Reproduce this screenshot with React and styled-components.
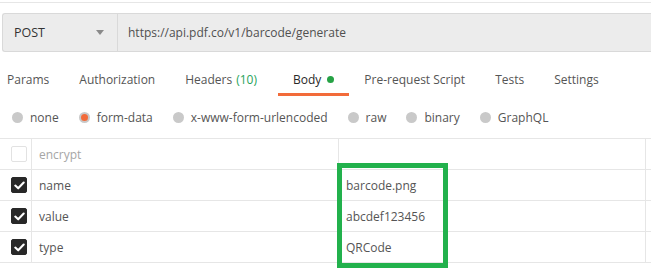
import React from 'react';
import styled, {createGlobalStyle} from 'styled-components';

const GlobalStyle = createGlobalStyle`
    body {
        margin: 0;
        background: #ffffff;
        font-family: "Open Sans", "Liberation Sans", sans-serif;
        font-size: 12px;
        color: #505050;
    }
`;

const Page = styled.div`
    width: 651px;
    height: 276px;
    padding-top: 2px;
    box-sizing: border-box;
    overflow: hidden;
`;

const TopRule = styled.div`
    height: 1px;
    background: #e6e6e6;
`;

const RequestBar = styled.div`
    display: flex;
    height: 39px;
    margin: 10px 0 0 2px;
    background: #ececec;
    border: 1px solid #d9d9d9;
    border-right: none;
    border-radius: 3px 0 0 3px;
    box-sizing: border-box;
`;

const MethodSelect = styled.div`
    width: 115px;
    display: flex;
    align-items: center;
    justify-content: space-between;
    padding: 0 13px 0 11px;
    box-sizing: border-box;
    border-right: 1px solid #d9d9d9;
    color: #333333;
    font-size: 12.5px;
`;

const Caret = styled.span`
    width: 0;
    height: 0;
    border-left: 4px solid transparent;
    border-right: 4px solid transparent;
    border-top: 5px solid #8a8a8a;
`;

const UrlInput = styled.div`
    flex: 1;
    display: flex;
    align-items: center;
    padding-left: 10px;
    color: #505050;
`;

const TabBar = styled.div`
    display: flex;
    height: 31px;
    margin-top: 12px;
    & > :first-child {
        padding-left: 7px;
    }
`;

const Tab = styled.div`
    position: relative;
    display: flex;
    align-items: center;
    height: 100%;
    padding: 0 15px;
    color: ${p => (p.$active ? '#282828' : '#555555')};
    white-space: nowrap;
    &::after {
        content: '';
        display: ${p => (p.$active ? 'block' : 'none')};
        position: absolute;
        left: 0;
        right: 0;
        bottom: -1px;
        height: 3px;
        background: #f26b3a;
    }
`;

const Count = styled.span`
    margin: 0 6px 0 4px;
    color: #29a35a;
`;

const Dot = styled.span`
    width: 7px;
    height: 7px;
    margin-left: 6px;
    border-radius: 50%;
    background: #26a245;
`;

const ModeBar = styled.div`
    display: flex;
    align-items: center;
    height: 30px;
    margin-top: 7px;
    padding-left: 12px;
    gap: 20px;
`;

const Mode = styled.label`
    display: flex;
    align-items: center;
    gap: 7px;
    color: #555555;
`;

const Radio = styled.span`
    position: relative;
    width: 11px;
    height: 11px;
    border-radius: 50%;
    background: #c9c9c9;
    &::after {
        content: '';
        display: ${p => (p.$checked ? 'block' : 'none')};
        position: absolute;
        left: 2px;
        top: 2px;
        width: 7px;
        height: 7px;
        border-radius: 50%;
        background: #f26b3a;
    }
`;

const Table = styled.div`
    position: relative;
    margin-top: 6px;
    border-top: 1px solid #e6e6e6;
`;

const Row = styled.div`
    display: grid;
    grid-template-columns: 32px 307px 307px 3px;
    height: 30px;
    border-bottom: 1px solid #e6e6e6;
`;

const Cell = styled.div`
    display: flex;
    align-items: center;
    padding-left: 7px;
    border-right: 1px solid #e6e6e6;
    color: ${p => (p.$muted ? '#a6a6a6' : '#555555')};
`;

const CheckCell = styled.div`
    display: flex;
    align-items: center;
    justify-content: flex-end;
    padding-right: 4px;
    border-right: 1px solid #e6e6e6;
`;

const Checkbox = styled.span`
    width: 16px;
    height: 16px;
    box-sizing: border-box;
    border-radius: 2px;
    display: flex;
    align-items: center;
    justify-content: center;
    background: ${p => (p.$checked ? '#282828' : '#ffffff')};
    border: 1px solid ${p => (p.$checked ? '#282828' : '#e2e2e2')};
`;

const Highlight = styled.div`
    position: absolute;
    left: 337px;
    top: 24px;
    width: 111px;
    height: 105px;
    border: 5px solid #22b14c;
    box-sizing: border-box;
    pointer-events: none;
`;

const tabs = [
    {label: 'Params'},
    {label: 'Authorization'},
    {label: 'Headers', count: '(10)'},
    {label: 'Body', active: true},
    {label: 'Pre-request Script'},
    {label: 'Tests'},
    {label: 'Settings'}
];

const modes = ['none', 'form-data', 'x-www-form-urlencoded', 'raw', 'binary', 'GraphQL'];

const rows = [
    {key: 'encrypt', value: '', checked: false},
    {key: 'name', value: 'barcode.png', checked: true},
    {key: 'value', value: 'abcdef123456', checked: true},
    {key: 'type', value: 'QRCode', checked: true}
];

const Tick = () => (
    <svg width="11" height="9" viewBox="0 0 11 9">
        <path d="M1.3 4.6 L4.2 7.3 L9.7 1.6" fill="none" stroke="#ffffff" strokeWidth="2.1" strokeLinecap="round" strokeLinejoin="round"/>
    </svg>
);

export default function App() {
    return (
        <Page>
            <GlobalStyle/>
            <TopRule/>
            <RequestBar>
                <MethodSelect>
                    POST
                    <Caret/>
                </MethodSelect>
                <UrlInput>https://api.pdf.co/v1/barcode/generate</UrlInput>
            </RequestBar>
            <TabBar>
                {tabs.map(t => (
                    <Tab key={t.label} $active={t.active}>
                        {t.label}
                        {t.count && <Count>{t.count}</Count>}
                        {t.active && <Dot/>}
                    </Tab>
                ))}
            </TabBar>
            <ModeBar>
                {modes.map(m => (
                    <Mode key={m}>
                        <Radio $checked={m === 'form-data'}/>
                        {m}
                    </Mode>
                ))}
            </ModeBar>
            <Table>
                {rows.map(r => (
                    <Row key={r.key}>
                        <CheckCell>
                            <Checkbox $checked={r.checked}>{r.checked && <Tick/>}</Checkbox>
                        </CheckCell>
                        <Cell $muted={!r.checked}>{r.key}</Cell>
                        <Cell>{r.value}</Cell>
                    </Row>
                ))}
                <Highlight/>
            </Table>
        </Page>
    );
}
